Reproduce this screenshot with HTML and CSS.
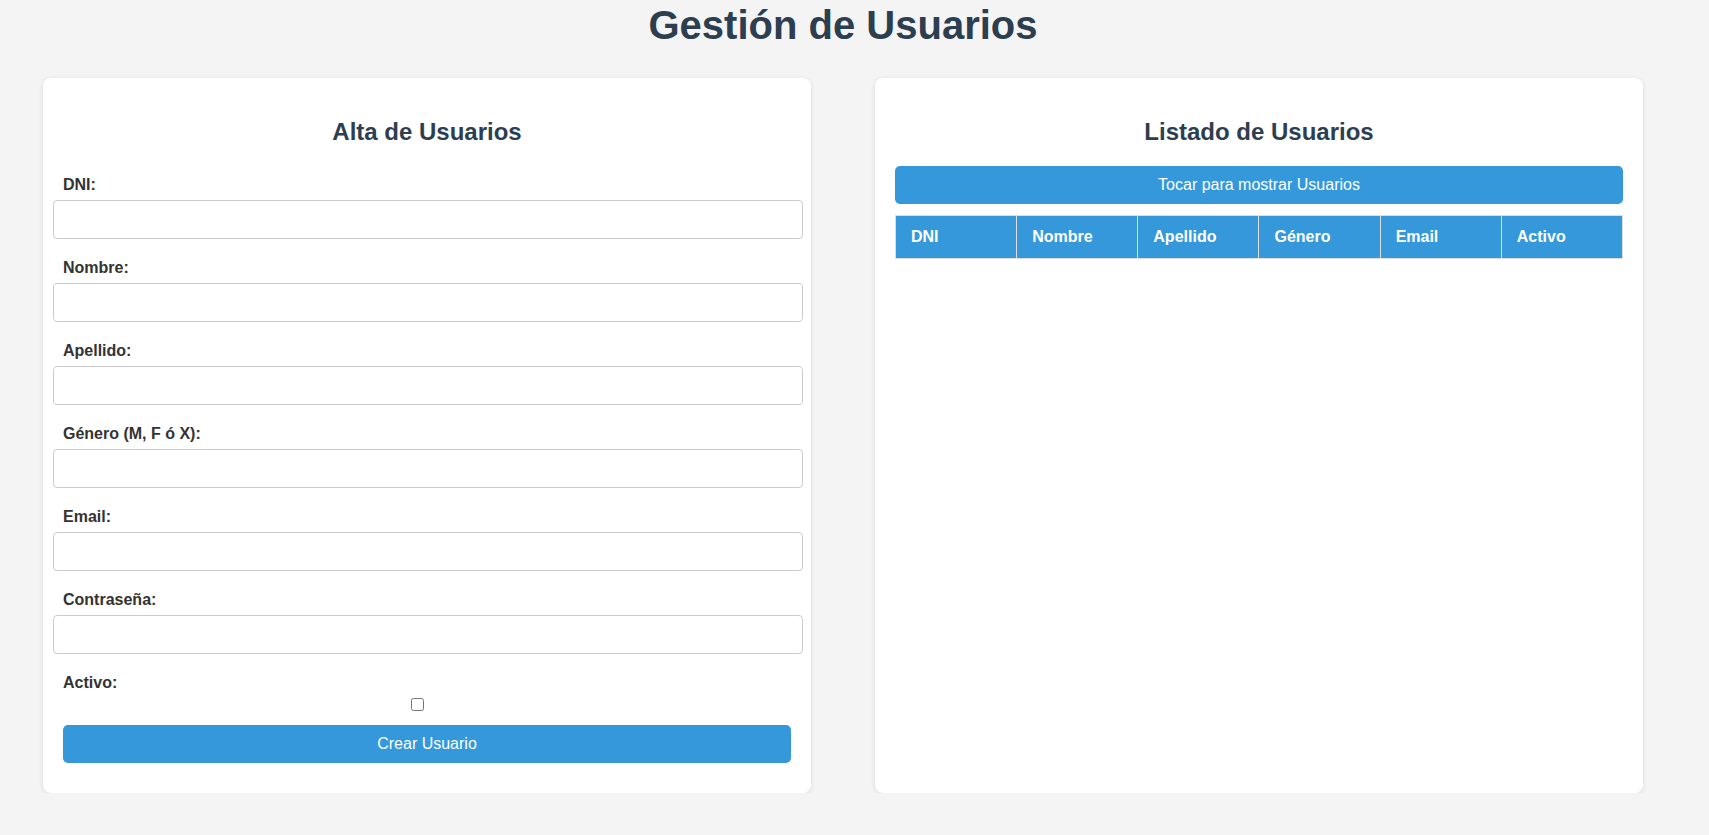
FILE: index.html
```html
<!DOCTYPE html>
<html lang="es">
<head>
<meta charset="utf-8">
<title>Gestión de Usuarios</title>
<link rel="stylesheet" href="styles.css">
</head>
<body>
<div class="page">
  <h1 class="title">Gestión de Usuarios</h1>
  <div class="container">
    <section class="card">
      <h2 class="card-title">Alta de Usuarios</h2>
      <form class="form">
        <div class="group">
          <label class="label" for="dni">DNI:</label>
          <input class="field" type="text" id="dni">
        </div>
        <div class="group">
          <label class="label" for="nombre">Nombre:</label>
          <input class="field" type="text" id="nombre">
        </div>
        <div class="group">
          <label class="label" for="apellido">Apellido:</label>
          <input class="field" type="text" id="apellido">
        </div>
        <div class="group">
          <label class="label" for="genero">Género (M, F ó X):</label>
          <input class="field" type="text" id="genero">
        </div>
        <div class="group">
          <label class="label" for="email">Email:</label>
          <input class="field" type="email" id="email">
        </div>
        <div class="group">
          <label class="label" for="pass">Contraseña:</label>
          <input class="field" type="password" id="pass">
        </div>
        <div class="group group-check">
          <label class="label" for="activo">Activo:</label>
          <div class="check-wrap"><input class="check" type="checkbox" id="activo"></div>
        </div>
        <button class="btn btn-create" type="button">Crear Usuario</button>
      </form>
    </section>
    <section class="card">
      <h2 class="card-title list-title">Listado de Usuarios</h2>
      <button class="btn btn-show" type="button">Tocar para mostrar Usuarios</button>
      <table class="users">
        <thead>
          <tr>
            <th>DNI</th>
            <th>Nombre</th>
            <th>Apellido</th>
            <th>Género</th>
            <th>Email</th>
            <th>Activo</th>
          </tr>
        </thead>
        <tbody></tbody>
      </table>
    </section>
  </div>
</div>
</body>
</html>
```
FILE: styles.css
```css
html, body {
  margin: 0;
  padding: 0;
}

body {
  background: #f4f4f4;
  font-family: "Liberation Sans", Arial, sans-serif;
  color: #333;
}

.page {
  width: 1686px;
}

.title {
  margin: 0;
  padding-top: 2px;
  font-size: 40px;
  line-height: 46px;
  font-weight: bold;
  text-align: center;
  color: #2c3e50;
}

.container {
  display: flex;
  gap: 64px;
  padding: 0 43px;
  margin-top: 30px;
  align-items: stretch;
}

.card {
  box-sizing: border-box;
  width: 768px;
  background: #fff;
  border-radius: 8px;
  padding: 20px;
  box-shadow: 0 1px 5px rgba(0, 0, 0, 0.1);
  display: flex;
  flex-direction: column;
}

.card-title {
  margin: 20px 0 20px;
  font-size: 24px;
  line-height: 28px;
  font-weight: bold;
  text-align: center;
  color: #2c3e50;
}

.form {
  display: flex;
  flex-direction: column;
}

.group {
  display: flex;
  flex-direction: column;
  padding-top: 10px;
  padding-bottom: 10px;
}

.label {
  display: block;
  font-size: 16px;
  line-height: 18px;
  font-weight: bold;
  color: #333;
  margin-bottom: 6px;
}

.field {
  box-sizing: border-box;
  display: block;
  width: calc(100% + 22px);
  height: 39px;
  margin: 0 0 0 -10px;
  padding: 10px;
  border: 1px solid #ccc;
  border-radius: 4px;
  font-family: "Liberation Sans", Arial, sans-serif;
  font-size: 16px;
  background: #fff;
}

.group-check {
  padding-bottom: 0;
}

.check-wrap {
  width: 100%;
  margin-left: -10px;
  height: 13px;
  display: flex;
  justify-content: center;
}

.check {
  margin: 0;
  width: 13px;
  height: 13px;
}

.btn {
  display: block;
  width: 100%;
  border: none;
  border-radius: 5px;
  background: #3498db;
  color: #fff;
  font-family: "Liberation Sans", Arial, sans-serif;
  font-size: 16px;
  line-height: 18px;
  padding: 10px;
  cursor: pointer;
}

.btn-create {
  margin-top: 14px;
  margin-bottom: 10px;
}

.btn-show {
  margin-top: 0;
}

.users {
  width: 100%;
  margin-top: 11px;
  border-collapse: collapse;
  table-layout: fixed;
}

.users th {
  background: #3498db;
  color: #fff;
  font-size: 16px;
  line-height: 18px;
  font-weight: bold;
  text-align: left;
  padding: 12px 15px;
  border: 1px solid #ddd;
}
```
